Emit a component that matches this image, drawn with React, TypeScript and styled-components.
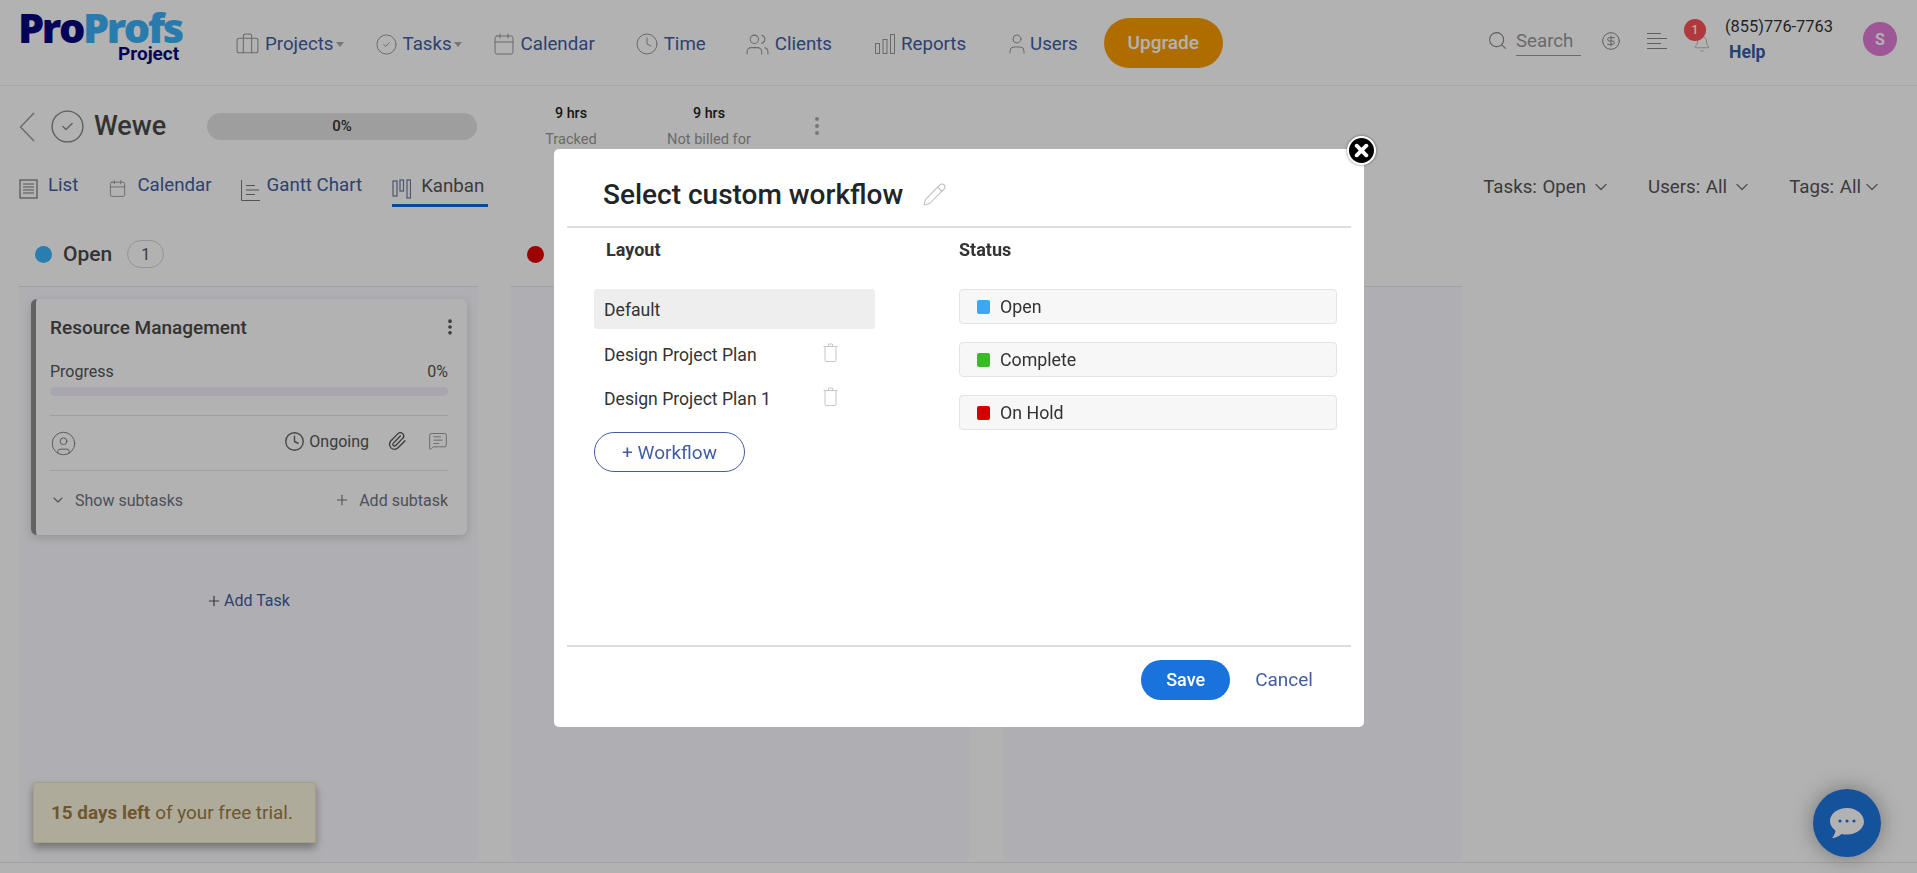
import React from "react";
import styled, { createGlobalStyle } from "styled-components";
import {
  Briefcase, CircleCheck, Calendar, Clock, Users, User, Search, CircleDollarSign, Bell,
  Paperclip, MessageSquareText, ChevronDown, Plus, Pencil, EllipsisVertical, CircleUser,
} from "lucide-react";

const Global = createGlobalStyle`
  html, body { margin: 0; padding: 0; background: #fff; }
  body { font-family: Roboto, "Liberation Sans", sans-serif; overflow: hidden; }
  * { box-sizing: border-box; }
`;

const Page = styled.div`
  width: 1917px; height: 873px; display: flex; flex-direction: column; background: #fff; overflow: hidden; position: relative;
`;
const TopBar = styled.header`
  height: 86px; flex: none; display: flex; align-items: center; border-bottom: 1px solid #eee; padding-left: 18px;
`;
const Logo = styled.div`
  width: 217px; flex: none; display: flex; flex-direction: column; align-items: flex-start; height: 70px;
`;
const LogoMark = styled.div`
  font-family: "Open Sans", Roboto, sans-serif; font-weight: 800; font-size: 41.5px; line-height: 38px; letter-spacing: -2.4px; color: #05057e;
  span { color: #3cb0f8; }
`;
const LogoSub = styled.div`
  font-weight: 700; font-size: 19px; line-height: 20px; color: #05057e; margin-left: 100px; margin-top: -2px;
`;
const Nav = styled.nav`
  display: flex; align-items: center; gap: 39px; padding-top: 3px;
`;
const NavItem = styled.a<{ $caret?: boolean; $lead?: number; $iconGap?: number }>`
  display: flex; align-items: center; gap: ${p => p.$iconGap ?? 5}px; color: #435da0; font-size: 18.7px; line-height: 24px;
  margin-left: ${p => p.$lead ?? 0}px;
  margin-right: ${p => (p.$caret ? "-9px" : "0")};
  svg { color: #999; flex: none; }
`;
const Caret = styled.i`
  width: 0; height: 0; border-left: 4px solid transparent; border-right: 4px solid transparent; border-top: 5px solid #aaa; margin-left: -3px;
`;
const UpgradeBtn = styled.button`
  width: 119px; height: 50px; border-radius: 25px; border: 0; background: #fb9d00; color: #fff; font: 500 19px Roboto, sans-serif; margin-left: -13px; margin-top: -3px;
`;
const RightTools = styled.div`
  margin-left: auto; display: flex; align-items: center;
`;
const SearchBox = styled.div`
  display: flex; align-items: center; gap: 8px; margin-right: 20px; margin-top: -4px;
  svg { color: #888; }
`;
const SearchLabel = styled.div`
  width: 65px; height: 30px; border-bottom: 1px solid #999; color: #999; font-size: 18.7px; line-height: 31px;
`;
const ToolIcon = styled.div`
  width: 20px; height: 20px; margin-right: 26px; color: #888; display: flex; margin-top: -4px;
`;
const BellWrap = styled.div`
  position: relative; width: 20px; height: 20px; margin-right: 12px; color: #aaa; margin-top: 5px;
`;
const Badge = styled.span`
  position: absolute; left: -9px; top: -16px; width: 22px; height: 22px; border-radius: 50%; background: #fb5258; color: #fff; font-size: 12px; font-weight: 500; display: flex; align-items: center; justify-content: center;
`;
const Contact = styled.div`
  width: 138px; display: flex; flex-direction: column; margin-top: -7px;
`;
const Phone = styled.div`font-size: 16.4px; line-height: 20px; color: #333;`;
const Help = styled.div`font-size: 17.6px; font-weight: 700; line-height: 20px; color: #3a5aa6; margin: 5px 0 0 4px;`;
const Avatar = styled.div`
  width: 34px; height: 34px; border-radius: 50%; background: #e37cd9; color: #fff; font-size: 16px; font-weight: 700; display: flex; align-items: center; justify-content: center; margin-right: 20px; margin-top: -7px;
`;

const ProjectRow = styled.div`
  height: 80px; flex: none; display: flex; align-items: center; padding-left: 19px;
`;
const BackIcon = styled.div`
  width: 16px; height: 30px; display: flex; margin-right: 14px; margin-top: 2px;
`;
const DoneIcon = styled.div`
  width: 37px; height: 37px; color: #888; display: flex; margin-right: 8px;
`;
const ProjectName = styled.h1`
  width: 113px; margin: 0; font-size: 27px; font-weight: 500; color: #4a4a4a;
`;
const Progress = styled.div`
  width: 270px; height: 27px; border-radius: 14px; background: #e2e2e2; color: #333; font-size: 15px; font-weight: 500; display: flex; align-items: center; justify-content: center;
`;
const Stat = styled.div<{ $gap: number }>`
  width: 120px; text-align: center; margin-left: ${p => p.$gap}px; align-self: flex-start; padding-top: 18px;
`;
const StatValue = styled.div`font-size: 14.3px; font-weight: 500; line-height: 18px; color: #222;`;
const StatLabel = styled.div`font-size: 14.6px; line-height: 18px; color: #999; margin-top: 8px;`;
const StatMenu = styled.div`
  width: 24px; height: 24px; color: #aaa; margin-left: 36px; margin-top: -1px;
`;

const TabsRow = styled.div`
  height: 41px; flex: none; display: flex; padding-left: 19px; align-items: flex-start;
`;
const Tab = styled.a<{ $active?: boolean; $gap: number; $iconGap: number }>`
  display: flex; height: 41px; gap: ${p => p.$iconGap}px; margin-right: ${p => p.$gap}px; font-size: 18.7px; color: ${p => (p.$active ? "#555" : "#435da0")};
  line-height: ${p => (p.$active ? "40px" : "38px")}; padding-right: ${p => (p.$active ? "4px" : "0")};
  border-bottom: ${p => (p.$active ? "3px solid #0e6ad3" : "0")};
  svg { margin-top: 13px; color: #888; flex: none; }
`;
const Filters = styled.div`
  margin-left: auto; display: flex; gap: 37px; padding-right: 35px; padding-top: 9px;
`;
const Filter = styled.div`
  display: flex; align-items: center; gap: 5px; font-size: 18.7px; line-height: 24px; color: #555; word-spacing: 1px;
  svg { color: #777; }
`;

const Board = styled.main`
  flex: 1; display: flex; gap: 33px; padding: 0 19px; min-height: 0;
`;
const Column = styled.section`
  width: 459px; display: flex; flex-direction: column;
`;
const ColumnHead = styled.div`
  height: 80px; flex: none; padding: 33px 0 0 16px; border-bottom: 1px solid #e6e4f2; display: flex; align-items: flex-start; gap: 11px;
`;
const Dot = styled.i<{ $c: string }>`
  width: 17px; height: 17px; border-radius: 50%; background: ${p => p.$c}; margin-top: 6px;
`;
const ColumnName = styled.div`
  font-size: 21px; font-weight: 500; line-height: 28px; color: #4a4a4a;
`;
const Count = styled.div`
  width: 37px; height: 28px; border-radius: 14px; border: 1px solid #d6d6d6; font-size: 16px; color: #555; display: flex; align-items: center; justify-content: center; margin-left: 4px;
`;
const ColumnBody = styled.div`
  flex: 1; background: #fbfaff; padding: 12px 11px 0 12px; display: flex; flex-direction: column; border-radius: 0 0 8px 8px;
`;
const Card = styled.article`
  height: 236px; background: #fff; border-left: 5px solid #8b8b8b; border-radius: 6px; box-shadow: 0 3px 10px rgba(0,0,0,.16); padding: 15px 19px 0 14px;
`;
const CardHead = styled.div`
  display: flex; justify-content: space-between; align-items: center; height: 26px;
  svg { color: #555; margin-right: -12px; }
`;
const CardTitle = styled.div`font-size: 19px; font-weight: 500; color: #4a4a4a;`;
const ProgressLabels = styled.div`
  display: flex; justify-content: space-between; font-size: 16px; line-height: 20px; color: #555; margin-top: 22px;
`;
const Track = styled.div`height: 9px; border-radius: 5px; background: #f3eefb; margin-top: 5px;`;
const CardMeta = styled.div`
  height: 56px; margin-top: 19px; border-top: 1px solid #e4e4e4; border-bottom: 1px solid #e4e4e4; display: flex; align-items: center;
  & > svg { flex: none; }
`;
const Ongoing = styled.div`
  margin-left: auto; display: flex; align-items: center; gap: 4px; font-size: 16px; color: #555; margin-top: -3px;
  svg { color: #666; }
`;
const MetaIcon = styled.div<{ $gap: number; $c: string }>`
  width: 20px; height: 20px; margin-left: ${p => p.$gap}px; color: ${p => p.$c}; margin-top: -4px;
`;
const CardFoot = styled.div`
  display: flex; justify-content: space-between; align-items: center; height: 58px; font-size: 16px; color: #6d7480;
`;
const FootAction = styled.div<{ $gap: number }>`
  display: flex; align-items: center; gap: ${p => p.$gap}px;
`;
const AddTask = styled.div`
  display: flex; justify-content: center; align-items: center; gap: 2px; font-size: 16px; color: #435da0; margin-top: 56px; padding-right: 2px;
  svg { color: #555; }
`;
const BottomLine = styled.div`height: 11px; flex: none; border-top: 1px solid #e6e6e6;`;

const Trial = styled.div`
  position: absolute; left: 33px; top: 782px; width: 283px; height: 61px; background: #fbf5df; border: 1px solid #efe5c4; border-radius: 2px; box-shadow: 0 5px 8px rgba(0,0,0,.35); display: flex; align-items: center; padding-left: 17px; font-size: 18.9px; color: #9d7b45;
  b { font-weight: 700; margin-right: 5px; }
`;
const Chat = styled.div`
  position: absolute; left: 1813px; top: 789px; width: 68px; height: 68px; border-radius: 50%; background: #1d77de; box-shadow: 0 0 22px rgba(0,0,0,.35); display: flex; align-items: center; justify-content: center;
`;

const Overlay = styled.div`
  position: fixed; inset: 0; background: rgba(0,0,0,.3); display: flex; align-items: flex-start; padding: 149px 0 0 554px;
`;
const Modal = styled.div`
  position: relative; width: 810px; height: 578px; background: #fff; border-radius: 5px; padding: 0 13px; display: flex; flex-direction: column;
`;
const Close = styled.button`
  position: absolute; right: -12px; top: -13px; width: 29px; height: 29px; border-radius: 50%; background: #000; border: 2px solid #fff; box-shadow: 0 0 3px rgba(0,0,0,.5); padding: 0; display: flex; align-items: center; justify-content: center;
`;
const ModalHead = styled.div`
  height: 79px; flex: none; display: flex; align-items: center; gap: 19px; padding: 14px 0 0 36px; border-bottom: 2px solid #ddd;
  svg { color: #bdbdbd; }
`;
const ModalTitle = styled.h2`
  margin: 0; font-size: 28px; font-weight: 500; color: #212529;
`;
const ModalBody = styled.div`
  flex: 1; display: flex; min-height: 0;
`;
const LayoutCol = styled.div`
  width: 392px; flex: none; padding-left: 27px;
`;
const StatusCol = styled.div`
  flex: 1; padding-right: 14px;
`;
const ColTitle = styled.div<{ $indent: number }>`
  font-size: 18px; font-weight: 700; line-height: 20px; color: #333; padding: 12px 0 0 ${p => p.$indent}px; height: 61px;
`;
const LayoutRow = styled.div<{ $selected?: boolean }>`
  width: 281px; height: ${p => (p.$selected ? "40px" : "44px")}; display: flex; align-items: center; padding: 2px 0 0 10px; font-size: 17.6px; color: #333; border-radius: 3px; background: ${p => (p.$selected ? "#eee" : "transparent")};
  margin-bottom: ${p => (p.$selected ? "3px" : "0")};
  svg { margin-left: auto; margin-right: 37px; color: #c6c6c6; flex: none; margin-top: -5px; }
`;
const AddWorkflow = styled.button`
  width: 151px; height: 40px; border-radius: 20px; border: 1px solid #435da0; background: #fff; color: #435da0; font: 400 19px Roboto, sans-serif; margin-top: 12px; display: block;
`;
const StatusRow = styled.div`
  height: 35px; margin-bottom: 18px; display: flex; align-items: center; gap: 10px; padding-left: 17px; border: 1px solid #e3e3e3; border-radius: 4px; background: #f7f7f7; font-size: 17.8px; color: #333;
`;
const Swatch = styled.i<{ $c: string }>`
  width: 13px; height: 14px; border-radius: 2px; background: ${p => p.$c};
`;
const ModalFoot = styled.div`
  height: 82px; flex: none; border-top: 2px solid #ddd; display: flex; align-items: center; justify-content: flex-end; padding: 0 38px 15px 0;
`;
const SaveBtn = styled.button`
  width: 89px; height: 40px; border-radius: 20px; border: 0; background: #1a73dc; color: #fff; font: 500 18px Roboto, sans-serif;
`;
const CancelBtn = styled.a`
  font-size: 19px; color: #435da0; margin-left: 25px;
`;

const BackChevron = () => (
  <svg width="16" height="30" viewBox="0 0 16 30" fill="none" stroke="#999" strokeWidth="1.4">
    <path d="M15 1L1.500 15 15 29" />
  </svg>
);
const ReportsIcon = () => (
  <svg width="22" height="22" viewBox="0 0 22 22" fill="none" stroke="#999" strokeWidth="1">
    <rect x="1.5" y="10.5" width="4" height="10" /><rect x="9" y="6.5" width="4" height="14" /><rect x="16.5" y="1.5" width="4" height="19" />
  </svg>
);
const ListDocIcon = () => (
  <svg width="19" height="20" viewBox="0 0 19 20" fill="none" stroke="#777" strokeWidth="1.2">
    <rect x="1" y="1" width="17" height="18" /><path d="M4 5h11M4 8h11M4 11h11M4 14h11" />
  </svg>
);
const GanttIcon = () => (
  <svg width="19" height="22" viewBox="0 0 19 22" fill="none" stroke="#777" strokeWidth="1">
    <path d="M.5 1v20.5H19M5 6.5h9M5 11h13M5 15.5h9" />
  </svg>
);
const KanbanIcon = () => (
  <svg width="19" height="20" viewBox="0 0 19 20" fill="none" stroke="#6c7ba0" strokeWidth="1.2">
    <rect x="1" y="2" width="4" height="15" /><rect x="8" y="1" width="3.5" height="11" /><rect x="15" y="1" width="3.5" height="18" />
  </svg>
);
const LinesIcon = () => (
  <svg width="20" height="20" viewBox="0 0 20 20" fill="none" stroke="#888" strokeWidth="1">
    <path d="M0 2.5h14M0 7.5h20M0 12.5h14M0 17.5h20" />
  </svg>
);
const TrashIcon = () => (
  <svg width="15" height="19" viewBox="0 0 15 19" fill="none" stroke="#c6c6c6" strokeWidth="1">
    <path d="M2 3.5h11v14a1 1 0 0 1-1 1H3a1 1 0 0 1-1-1zM.5 3.5h14M5.500 3.500v-2.500h4v2.500" />
  </svg>
);
const XGlyph = () => (
  <svg width="15" height="15" viewBox="0 0 14 14" fill="none" stroke="#fff" strokeWidth="3.6" strokeLinecap="round">
    <path d="M2.500 2.500l9 9M11.500 2.500l-9 9" />
  </svg>
);
const ChatGlyph = () => (
  <svg width="36" height="32" viewBox="0 0 36 32">
    <path d="M18 1C8.600 1 1 6.800 1 14c0 3.800 2.100 7.200 5.400 9.600-.2 2.600-1.300 5.200-3.400 7.400 3.600-.2 7.200-1.600 9.600-4 1.700.4 3.500.6 5.400.6 9.400 0 17-5.800 17-13S27.400 1 18 1z" fill="#fff" />
    <circle cx="11" cy="14" r="1.6" fill="#1d77de" /><circle cx="18" cy="14" r="1.6" fill="#1d77de" /><circle cx="25" cy="14" r="1.6" fill="#1d77de" />
  </svg>
);

const layouts = [
  { name: "Default", selected: true },
  { name: "Design Project Plan" },
  { name: "Design Project Plan 1" },
];
const statuses = [
  { name: "Open", color: "#3ca7f5" },
  { name: "Complete", color: "#3cb928" },
  { name: "On Hold", color: "#d40000" },
];

export default function App() {
  return (
    <Page>
      <Global />
      <TopBar>
        <Logo>
          <LogoMark>Pro<span>Profs</span></LogoMark>
          <LogoSub>Project</LogoSub>
        </Logo>
        <Nav>
          <NavItem $caret><Briefcase size={25} strokeWidth={1} />Projects<Caret /></NavItem>
          <NavItem $caret $lead={1}><CircleCheck size={23} strokeWidth={1} />Tasks<Caret /></NavItem>
          <NavItem><Calendar size={24} strokeWidth={1} />Calendar</NavItem>
          <NavItem $lead={1}><Clock size={24} strokeWidth={1} />Time</NavItem>
          <NavItem><Users size={25} strokeWidth={1} />Clients</NavItem>
          <NavItem $lead={3}><ReportsIcon />Reports</NavItem>
          <NavItem $iconGap={1}><User size={24} strokeWidth={1} />Users</NavItem>
          <UpgradeBtn>Upgrade</UpgradeBtn>
        </Nav>
        <RightTools>
          <SearchBox><Search size={21} strokeWidth={1.2} /><SearchLabel>Search</SearchLabel></SearchBox>
          <ToolIcon><CircleDollarSign size={20} strokeWidth={1.2} /></ToolIcon>
          <ToolIcon><LinesIcon /></ToolIcon>
          <BellWrap><Bell size={18} strokeWidth={1.1} /><Badge>1</Badge></BellWrap>
          <Contact><Phone>(855)776-7763</Phone><Help>Help</Help></Contact>
          <Avatar>S</Avatar>
        </RightTools>
      </TopBar>

      <ProjectRow>
        <BackIcon><BackChevron /></BackIcon>
        <DoneIcon><CircleCheck size={37} strokeWidth={0.9} /></DoneIcon>
        <ProjectName>Wewe</ProjectName>
        <Progress>0%</Progress>
        <Stat $gap={34}><StatValue>9 hrs</StatValue><StatLabel>Tracked</StatLabel></Stat>
        <Stat $gap={18}><StatValue>9 hrs</StatValue><StatLabel>Not billed for</StatLabel></Stat>
        <StatMenu><EllipsisVertical size={24} strokeWidth={2} /></StatMenu>
      </ProjectRow>

      <TabsRow>
        <Tab $gap={30} $iconGap={10}><ListDocIcon />List</Tab>
        <Tab $gap={29} $iconGap={10}><Calendar size={19} strokeWidth={1} />Calendar</Tab>
        <Tab $gap={30} $iconGap={7}><GanttIcon />Gantt Chart</Tab>
        <Tab $active $gap={0} $iconGap={10}><KanbanIcon />Kanban</Tab>
        <Filters>
          <Filter>Tasks: Open<ChevronDown size={20} strokeWidth={1.6} /></Filter>
          <Filter>Users: All<ChevronDown size={20} strokeWidth={1.6} /></Filter>
          <Filter>Tags: All<ChevronDown size={20} strokeWidth={1.6} style={{ marginLeft: -4 }} /></Filter>
        </Filters>
      </TabsRow>

      <Board>
        <Column>
          <ColumnHead><Dot $c="#3cb4fb" /><ColumnName>Open</ColumnName><Count>1</Count></ColumnHead>
          <ColumnBody>
            <Card>
              <CardHead><CardTitle>Resource Management</CardTitle><EllipsisVertical size={20} strokeWidth={2.4} /></CardHead>
              <ProgressLabels><span>Progress</span><span>0%</span></ProgressLabels>
              <Track />
              <CardMeta>
                <CircleUser size={27} strokeWidth={0.8} color="#777" />
                <Ongoing><Clock size={21} strokeWidth={1.6} />Ongoing</Ongoing>
                <MetaIcon $gap={18} $c="#555"><Paperclip size={20} strokeWidth={1.6} /></MetaIcon>
                <MetaIcon $gap={21} $c="#888"><MessageSquareText size={20} strokeWidth={1} /></MetaIcon>
              </CardMeta>
              <CardFoot>
                <FootAction $gap={9}><ChevronDown size={16} strokeWidth={1.6} />Show subtasks</FootAction>
                <FootAction $gap={9}><Plus size={16} strokeWidth={1.6} />Add subtask</FootAction>
              </CardFoot>
            </Card>
            <AddTask><Plus size={16} strokeWidth={1.8} />Add Task</AddTask>
          </ColumnBody>
        </Column>
        <Column>
          <ColumnHead><Dot $c="#e00000" /></ColumnHead>
          <ColumnBody />
        </Column>
        <Column>
          <ColumnHead />
          <ColumnBody />
        </Column>
      </Board>
      <BottomLine />

      <Trial><b>15 days left</b> of your free trial.</Trial>
      <Chat><ChatGlyph /></Chat>

      <Overlay>
        <Modal>
          <Close aria-label="Close"><XGlyph /></Close>
          <ModalHead>
            <ModalTitle>Select custom workflow</ModalTitle>
            <Pencil size={25} strokeWidth={1} />
          </ModalHead>
          <ModalBody>
            <LayoutCol>
              <ColTitle $indent={12}>Layout</ColTitle>
              {layouts.map(l => (
                <LayoutRow key={l.name} $selected={l.selected}>{l.name}{!l.selected && <TrashIcon />}</LayoutRow>
              ))}
              <AddWorkflow>+ Workflow</AddWorkflow>
            </LayoutCol>
            <StatusCol>
              <ColTitle $indent={0}>Status</ColTitle>
              {statuses.map(s => (
                <StatusRow key={s.name}><Swatch $c={s.color} />{s.name}</StatusRow>
              ))}
            </StatusCol>
          </ModalBody>
          <ModalFoot>
            <SaveBtn>Save</SaveBtn>
            <CancelBtn>Cancel</CancelBtn>
          </ModalFoot>
        </Modal>
      </Overlay>
    </Page>
  );
}
